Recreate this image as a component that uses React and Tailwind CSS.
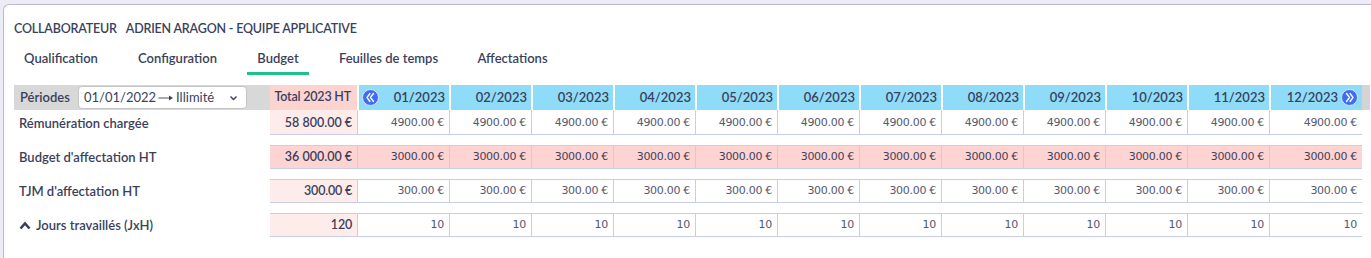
import React from "react";

const months = ["01", "02", "03", "04", "05", "06", "07", "08", "09", "10", "11", "12"];

const rows = [
  { label: "Rémunération chargée", total: "58\u202F800.00 €", value: "4900.00 €", kind: "light" },
  { label: "Budget d'affectation HT", total: "36\u202F000.00 €", value: "3000.00 €", kind: "pink" },
  { label: "TJM d'affectation HT", total: "300.00 €", value: "300.00 €", kind: "light" },
  { label: "Jours travaillés (JxH)", total: "120", value: "10", kind: "light", caret: true },
];

const tabs = [
  { name: "Qualification", w: "w-[94px]" },
  { name: "Configuration", w: "w-[99px]" },
  { name: "Budget", w: "w-[62px]" },
  { name: "Feuilles de temps", w: "w-[119px]" },
  { name: "Affectations", w: "w-[89px]" },
];

const colWidth = (i) => (i === 0 ? "w-[92px]" : i === 11 ? "w-[93px]" : "w-[82px]");

const NavButton = ({ dir }) => (
  <svg width="17" height="17" viewBox="0 0 17 17" className="shrink-0">
    <circle cx="8.5" cy="8.5" r="8" fill="#3f6df2" stroke="#dfe6ff" strokeWidth="1" />
    {dir === "left" ? (
      <path
        d="M8 4.5 L5 8.5 L8 12.5 M11.5 4.5 L8.5 8.5 L11.5 12.5"
        fill="none"
        stroke="white"
        strokeWidth="1.3"
        strokeLinecap="round"
        strokeLinejoin="round"
      />
    ) : (
      <path
        d="M5.5 4.5 L8.5 8.5 L5.5 12.5 M9 4.5 L12 8.5 L9 12.5"
        fill="none"
        stroke="white"
        strokeWidth="1.3"
        strokeLinecap="round"
        strokeLinejoin="round"
      />
    )}
  </svg>
);

const App = () => {
  return (
    <div className="h-[258px] w-[1371px] overflow-hidden bg-[#ecebf6] pl-[3px] pt-[4px] font-['Lato',sans-serif] text-[#3b3f5c]">
      <div className="h-[300px] rounded-tl-[6px] border-l border-t border-[#b9bad1] bg-white pl-[10px] pt-[14px]">
        <div className="flex h-[20px] items-center gap-[9px] text-[12.5px] font-semibold leading-[20px] tracking-[-0.2px]">
          <span>COLLABORATEUR</span>
          <span>ADRIEN ARAGON - EQUIPE APPLICATIVE</span>
        </div>

        <div className="mt-[9px] flex gap-[20px] text-[13px] font-semibold">
          {tabs.map((t) => (
            <div
              key={t.name}
              className={`${t.w} pb-[4px] text-center leading-[20px] whitespace-nowrap border-b-[3px] ${t.name === "Budget" ? "border-[#20c08a]" : "border-transparent"}`}
            >
              {t.name}
            </div>
          ))}
        </div>

        <div className="mt-[10px] text-[13px]">
          <div className="flex h-[25px]">
            <div className="flex w-[256px] items-center bg-[#d8d8d8] pl-[6px]">
              <span className="w-[58px] font-semibold">Périodes</span>
              <div className="flex h-[23px] w-[169px] items-center rounded-[4px] border border-[#c4c4c4] bg-white pl-[5px] pr-[8px]">
                <span>01/01/2022</span>
                <svg width="16" height="8" viewBox="0 0 16 8" className="mx-[2px]">
                  <path d="M0.5 4 H13" stroke="#3b3f5c" strokeWidth="0.9" />
                  <path d="M11 1.5 L15 4 L11 6.5 Z" fill="#3b3f5c" />
                </svg>
                <span>Illimité</span>
                <svg width="9" height="6" viewBox="0 0 9 6" className="ml-auto">
                  <path d="M1.5 1.5 L4.5 4.5 L7.5 1.5" fill="none" stroke="#3b3f5c" strokeWidth="1.4" />
                </svg>
              </div>
            </div>
            <div className="flex w-[87px] items-center justify-end whitespace-nowrap bg-[#fdd3d0] pr-[6px] text-[12.5px] font-semibold tracking-[-0.2px]">
              Total 2023 HT
            </div>
            {months.map((m, i) => (
              <div
                key={m}
                className={`flex ${colWidth(i)} items-center justify-end border-l-2 border-white bg-[#8fdcf8] pr-[4px] font-semibold`}
              >
                {i === 0 && (
                  <div className="mr-auto pl-[3px]">
                    <NavButton dir="left" />
                  </div>
                )}
                <span>{m}/2023</span>
                {i === 11 && (
                  <div className="ml-[3px]">
                    <NavButton dir="right" />
                  </div>
                )}
              </div>
            ))}
            <div className="w-[8px] bg-[#d4d4d4]" />
          </div>

          {rows.map((r, ri) => {
            const first = ri === 0;
            const cellBorder = first ? "border-b pt-[3px]" : "border-y pt-[1px]";
            return (
              <div key={r.label} className={`flex ${first ? "h-[25px]" : "mt-[10px] h-[24px]"}`}>
                <div className={`flex w-[256px] items-center gap-[5px] pl-[5px] font-semibold ${first ? "pt-[3px]" : "pt-[1px]"}`}>
                  {r.caret && (
                    <svg width="12" height="9" viewBox="0 0 12 9">
                      <path d="M1.5 7.5 L6 2.5 L10.5 7.5" fill="none" stroke="#3b3f5c" strokeWidth="2.6" />
                    </svg>
                  )}
                  <span>{r.label}</span>
                </div>
                <div
                  className={`flex w-[87px] items-center justify-end border-[#c9cde8] pr-[5px] text-[12.5px] font-semibold tracking-[-0.2px] ${cellBorder} ${r.kind === "pink" ? "bg-[#fdd4d2]" : "bg-[#fdecea]"}`}
                >
                  {r.total}
                </div>
                {months.map((m, i) => (
                  <div
                    key={m}
                    className={`flex ${colWidth(i)} items-center justify-end border-l border-[#c9cde8] pr-[5px] font-['DejaVu_Sans',sans-serif] text-[11px] tracking-[-0.3px] ${cellBorder} ${r.kind === "pink" ? "bg-[#fdd4d2] text-[#3b3f5c]" : "bg-white text-[#555870]"}`}
                  >
                    {r.value}
                  </div>
                ))}
              </div>
            );
          })}
        </div>
      </div>
    </div>
  );
};

export default App;
